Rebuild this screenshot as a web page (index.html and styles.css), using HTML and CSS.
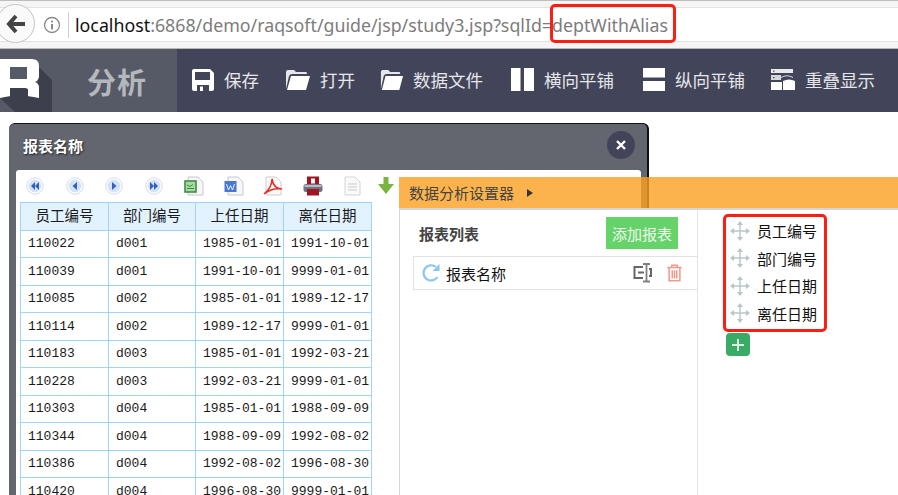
FILE: index.html
```html
<!DOCTYPE html>
<html>
<head>
    <meta charset="UTF-8">
    <title>数据分析设置器</title>
    <link rel="stylesheet" href="styles.css">
</head>
<body>

    <!-- Browser address bar -->
    <div class="browser-bar">
        <div class="back-btn">
            <svg width="20" height="20" viewBox="0 0 20 20"><path d="M10 2 L3 10 L10 18 M3.5 10 H19" fill="none" stroke="#444" stroke-width="4"/></svg>
        </div>
        <div class="address">
            <svg class="info" width="18" height="18" viewBox="0 0 18 18"><circle cx="9" cy="9" r="7.5" fill="none" stroke="#8a8a8a" stroke-width="1.3"/><rect x="8.2" y="8" width="1.7" height="5.5" fill="#777"/><rect x="8.2" y="4.6" width="1.7" height="1.8" fill="#777"/></svg>
            <span class="url"><span class="host">localhost</span>:6868/demo/raqsoft/guide/jsp/study3.jsp?sqlId=deptWithAlias</span>
        </div>
    </div>
    <div class="mark mark-url"></div>

    <!-- App nav -->
    <div class="nav">
        <div class="brand">
            <svg class="logo" width="56" height="63" viewBox="0 0 56 63">
                <path d="M0 49 L15 63 H52 V31 L38 17 V48 H28 V39 H10 V48 H0 Z" fill="#3d404c"/>
                <path d="M0 10 H32 Q39 10 39 17 V27 Q39 31 35 33 Q39 35 39 38 V49 L28 47 V41 Q28 39 25 39 H10 V47 L0 49 Z M10 18 V30 H27 V18 Z" fill="#fff" fill-rule="evenodd"/>
            </svg>
            <span class="brand-name">分析</span>
        </div>
        <div class="nav-items">
            <div class="nav-item">
                <svg width="22" height="22" viewBox="0 0 22 22"><path d="M2 0 H18 L22 4 V20 Q22 22 20 22 H2 Q0 22 0 20 V2 Q0 0 2 0 Z M3 3 V11 H18 V3 Z M5 16 V22 H17 V16 Z" fill="#fff" fill-rule="evenodd"/><rect x="8" y="17.5" width="3" height="4.5" fill="#fff"/></svg>
                <span>保存</span>
            </div>
            <div class="nav-item">
                <svg width="25" height="22" viewBox="0 0 25 22"><path d="M1 20 V3 Q1 1 3 1 H9 L11 3 H21 Q22 3 22 5 H7 Q5 5 4 7 Z" fill="#e6e7ea"/><path d="M6 7 H25 L21 21 H2 Z" fill="#fff"/></svg>
                <span>打开</span>
            </div>
            <div class="nav-item tight">
                <svg width="23" height="22" viewBox="0 0 25 22" preserveAspectRatio="none"><path d="M1 20 V3 Q1 1 3 1 H9 L11 3 H21 Q22 3 22 5 H7 Q5 5 4 7 Z" fill="#e6e7ea"/><path d="M6 7 H25 L21 21 H2 Z" fill="#fff"/></svg>
                <span>数据文件</span>
            </div>
            <div class="nav-item tiled">
                <svg width="23" height="23" viewBox="0 0 23 23"><rect x="0" y="0" width="9.5" height="23" fill="#fff"/><rect x="13" y="0" width="10" height="23" fill="#fff"/></svg>
                <span>横向平铺</span>
            </div>
            <div class="nav-item tiled-wide">
                <svg width="22" height="23" viewBox="0 0 23 23" preserveAspectRatio="none"><rect x="0" y="0" width="23" height="9.5" fill="#fff"/><rect x="0" y="13" width="23" height="10" fill="#fff"/></svg>
                <span>纵向平铺</span>
            </div>
            <div class="nav-item">
                <svg width="24" height="21" viewBox="0 0 24 21"><rect x="0" y="0" width="22" height="4" fill="#e8e9ec"/><rect x="2" y="1.5" width="1.5" height="1.2" fill="#555"/><rect x="0" y="6" width="10" height="5" fill="#d5d6db"/><rect x="2" y="8" width="1.5" height="1.2" fill="#555"/><path d="M10 8.5 Q16 5 22 8.5" fill="none" stroke="#d5d6db"/><rect x="0" y="13" width="11" height="8" fill="#fff"/><path d="M12 21 V12 Q18 9 24 12 V21 Z" fill="#fff"/></svg>
                <span>重叠显示</span>
            </div>
        </div>
    </div>

    <!-- Report window -->
    <div class="window">
        <div class="window-head">
            <span class="window-title">报表名称</span>
            <div class="close-btn">
                <svg width="10" height="10" viewBox="0 0 10 10"><path d="M1 1 L9 9 M9 1 L1 9" stroke="#fff" stroke-width="2.4"/></svg>
            </div>
        </div>
        <div class="window-body">
            <div class="toolbar">
                <svg class="pager" width="18" height="18" viewBox="0 0 18 18"><circle cx="9" cy="9" r="8.2" fill="#fff" stroke="#d3dbe8"/><circle cx="9" cy="9" r="6.4" fill="#d5e2f7"/><path d="M9 5 V13 L5 9 Z M13 5 V13 L9 9 Z" fill="#2f63bd"/></svg>
                <svg class="pager" width="18" height="18" viewBox="0 0 18 18"><circle cx="9" cy="9" r="8.2" fill="#fff" stroke="#d3dbe8"/><circle cx="9" cy="9" r="6.4" fill="#d5e2f7"/><path d="M11 5 V13 L6.5 9 Z" fill="#2f63bd"/></svg>
                <svg class="pager" width="18" height="18" viewBox="0 0 18 18"><circle cx="9" cy="9" r="8.2" fill="#fff" stroke="#d3dbe8"/><circle cx="9" cy="9" r="6.4" fill="#d5e2f7"/><path d="M7 5 V13 L11.5 9 Z" fill="#2f63bd"/></svg>
                <svg class="pager" width="18" height="18" viewBox="0 0 18 18"><circle cx="9" cy="9" r="8.2" fill="#fff" stroke="#d3dbe8"/><circle cx="9" cy="9" r="6.4" fill="#d5e2f7"/><path d="M5 5 V13 L9 9 Z M9 5 V13 L13 9 Z" fill="#2f63bd"/></svg>
                <svg class="doc" width="20" height="20" viewBox="0 0 20 20"><path d="M4 1 H14 L19 6 V19 H4 Z" fill="#f7f7f7" stroke="#c8c8d0"/><rect x="1" y="5" width="11" height="11" fill="#a9d8a8" stroke="#3c8f42" stroke-width="1.6"/><path d="M3 9 L6 10.5 L9 8.5 M3 12.5 H10" stroke="#3c8f42" fill="none"/></svg>
                <svg class="doc" width="20" height="20" viewBox="0 0 20 20"><path d="M4 1 H14 L19 6 V19 H4 Z" fill="#f7f7f7" stroke="#c4c8d8"/><rect x="0.5" y="5" width="12" height="11" fill="#4a78d0"/><path d="M2.5 8 L4.5 14 L6.5 9.5 L8.5 14 L10.5 8" fill="none" stroke="#e3ecfb"/></svg>
                <svg class="doc" width="20" height="20" viewBox="0 0 20 20"><path d="M3 1 H13 L18 6 V19 H3 Z" fill="#fafafa" stroke="#d0ccd0"/><path d="M1 18 C6 14 9 8 9 3 C10 9 13 13 19 13 C13 12 6 14 1 18 Z" fill="none" stroke="#e0342a" stroke-width="1.6"/></svg>
                <svg class="doc" width="20" height="20" viewBox="0 0 20 20"><rect x="4" y="0.5" width="12" height="9" fill="#a11420"/><rect x="0.5" y="8" width="19" height="8" rx="2.5" fill="#6c7280"/><rect x="1.5" y="9" width="17" height="2" fill="#b6bac2"/><rect x="4" y="13" width="12" height="6.5" fill="#a11420"/><rect x="8" y="2.5" width="4" height="5" fill="#fff"/></svg>
                <svg class="doc" width="20" height="20" viewBox="0 0 20 20"><path d="M3 1 H13 L18 6 V19 H3 Z" fill="#fafafa" stroke="#d4d4d4"/><path d="M6 8 H15 M6 11 H15 M6 14 H15" stroke="#c8c8c8"/></svg>
                <svg class="arrow" width="16" height="17" viewBox="0 0 16 17"><path d="M5.5 0 H10.5 V7 H16 L8 17 L0 7 H5.5 Z" fill="#7ab540"/></svg>
            </div>
            <table class="report">
                <tr><th>员工编号</th><th>部门编号</th><th>上任日期</th><th>离任日期</th></tr>
                <tr><td>110022</td><td>d001</td><td>1985-01-01</td><td>1991-10-01</td></tr>
                <tr><td>110039</td><td>d001</td><td>1991-10-01</td><td>9999-01-01</td></tr>
                <tr><td>110085</td><td>d002</td><td>1985-01-01</td><td>1989-12-17</td></tr>
                <tr><td>110114</td><td>d002</td><td>1989-12-17</td><td>9999-01-01</td></tr>
                <tr><td>110183</td><td>d003</td><td>1985-01-01</td><td>1992-03-21</td></tr>
                <tr><td>110228</td><td>d003</td><td>1992-03-21</td><td>9999-01-01</td></tr>
                <tr><td>110303</td><td>d004</td><td>1985-01-01</td><td>1988-09-09</td></tr>
                <tr><td>110344</td><td>d004</td><td>1988-09-09</td><td>1992-08-02</td></tr>
                <tr><td>110386</td><td>d004</td><td>1992-08-02</td><td>1996-08-30</td></tr>
                <tr><td>110420</td><td>d004</td><td>1996-08-30</td><td>9999-01-01</td></tr>
            </table>
        </div>
    </div>

    <!-- Settings panel lying over the window -->
    <div class="panel">
        <div class="panel-head">
            <span>数据分析设置器</span>
            <i class="caret"></i>
        </div>
        <div class="panel-main">
            <div class="report-list">
                <div class="list-head">
                    <span class="list-title">报表列表</span>
                    <button class="add-btn">添加报表</button>
                </div>
                <div class="list-row">
                    <svg width="20" height="20" viewBox="0 0 20 20"><path d="M16.5 14 A7.6 7.6 0 1 1 15 4" fill="none" stroke="#8cc6ec" stroke-width="2.2"/><path d="M18.5 1 V8 H11.5 Z" fill="#8cc6ec"/></svg>
                    <span class="row-name">报表名称</span>
                    <svg class="rename" width="19" height="20" viewBox="0 0 19 20"><path d="M10 4 H1.5 V15 H10 M16 6 H18 V13 H16 M5 9.5 H11" fill="none" stroke="#666" stroke-width="2"/><path d="M10 1 H17 M10 18.5 H17 M13.5 1 V18.5" fill="none" stroke="#808080" stroke-width="1.8"/></svg>
                    <svg class="trash" width="17" height="18" viewBox="0 0 18 20"><path d="M1 4 H17 M6 4 V1.5 H12 V4 M3 4 V18.5 H15 V4 M6.5 7 V16 M9 7 V16 M11.5 7 V16" fill="none" stroke="#f2998c" stroke-width="1.7"/></svg>
                </div>
            </div>
            <div class="fields">
                <div class="field"><svg class="move" width="20" height="20"><use href="#move"/></svg><span>员工编号</span></div>
                <div class="field"><svg class="move" width="20" height="20"><use href="#move"/></svg><span>部门编号</span></div>
                <div class="field"><svg class="move" width="20" height="20"><use href="#move"/></svg><span>上任日期</span></div>
                <div class="field"><svg class="move" width="20" height="20"><use href="#move"/></svg><span>离任日期</span></div>
                <div class="add-field">
                    <svg width="12" height="12" viewBox="0 0 12 12"><path d="M6 0 V12 M0 6 H12" stroke="#d9f0e0" stroke-width="2"/></svg>
                </div>
            </div>
        </div>
    </div>
    <div class="mark mark-fields"></div>

    <svg class="defs" width="0" height="0">
        <symbol id="move" viewBox="0 0 20 20">
            <path d="M10 2 V18 M2 10 H18" stroke="#b9c6c6" stroke-width="1.4"/>
            <path d="M10 0 L13 4 H7 Z M10 20 L13 16 H7 Z M0 10 L4 7 V13 Z M20 10 L16 7 V13 Z" fill="#b9c6c6"/>
        </symbol>
    </svg>

</body>
</html>
```

FILE: styles.css
```css
/* General Styling */
html, body {
    height: 495px;
    overflow: hidden;
}

body {
    position: relative;
    margin: 0;
    background: #fff;
    font-family: "Noto Sans CJK SC", "Noto Sans", sans-serif;
    color: #222;
}

/* Browser bar */
.browser-bar {
    box-sizing: border-box;
    height: 49px;
    padding-top: 6px;
    background: #f5f5f5;
    border-top: 1px solid #bdbdbd;
    border-bottom: 1px solid #b8b8b8;
    position: relative;
}

.back-btn {
    box-sizing: border-box;
    position: absolute;
    left: -4px;
    top: 3px;
    width: 39px;
    height: 39px;
    padding-left: 1px;
    border: 1px solid #c4c4c4;
    border-radius: 50%;
    background: #fafafa;
    display: flex;
    align-items: center;
    justify-content: center;
    z-index: 1;
}

.address {
    box-sizing: border-box;
    height: 35px;
    padding-left: 43px;
    background: #fff;
    border-top: 1px solid #e2e2e2;
    border-bottom: 1px solid #e2e2e2;
    display: flex;
    align-items: center;
}

.info {
    margin-right: 7px;
}

.url {
    padding-left: 6px;
    border-left: 1px solid #cfcfcf;
    font-family: "Noto Sans", sans-serif;
    font-size: 17.8px;
    line-height: 26px;
    color: #7c7c7c;
    white-space: nowrap;
}

.host {
    color: #111;
}

/* Red annotation boxes */
.mark {
    box-sizing: border-box;
    position: absolute;
    border: 3px solid #fb1f12;
    border-radius: 5px;
    z-index: 5;
}

.mark-url {
    left: 550px;
    top: 4px;
    width: 126px;
    height: 39px;
}

.mark-fields {
    left: 723px;
    top: 214px;
    width: 104px;
    height: 118px;
}

/* Nav */
.nav {
    height: 63px;
    display: flex;
    background: #424559;
}

.brand {
    width: 177px;
    background: #555a66;
    display: flex;
    align-items: center;
}

.logo {
    flex: none;
}

.brand-name {
    margin-left: 31px;
    font-size: 29px;
    font-weight: 700;
    letter-spacing: 1px;
    color: #b4b7bc;
}

.nav-items {
    display: flex;
    align-items: center;
    gap: 26px;
    padding-left: 15px;
}

.nav-item {
    display: flex;
    align-items: center;
    gap: 10px;
    padding-bottom: 2px;
    color: #e6e7ea;
    font-size: 17.5px;
    white-space: nowrap;
}

.tight {
    margin-left: -1px;
}

.tiled {
    margin-left: 2px;
}

.tiled-wide {
    margin-left: 3px;
}

/* Report window */
.window {
    box-sizing: border-box;
    width: 640px;
    height: 372px;
    margin: 11px 0 0 9px;
    padding: 0 6px 0 7px;
    background: #63666f;
    border-top: 1px solid #111;
    border-right: 2px solid #111;
    border-radius: 6px 6px 0 0;
    overflow: hidden;
}

.window-head {
    height: 46px;
    padding-bottom: 4px;
    box-sizing: border-box;
    display: flex;
    align-items: center;
    justify-content: space-between;
}

.window-title {
    margin-left: 7px;
    font-size: 15px;
    font-weight: 700;
    color: #fff;
    text-shadow: 1px 1px 2px #222;
}

.close-btn {
    width: 28px;
    height: 28px;
    margin-right: 6px;
    border-radius: 50%;
    background: #424559;
    display: flex;
    align-items: center;
    justify-content: center;
}

.window-body {
    height: 330px;
    padding: 0 4px;
    background: #fff;
    border-radius: 3px 3px 0 0;
    overflow: hidden;
}

.toolbar {
    height: 32px;
    display: flex;
    align-items: center;
    padding-left: 6px;
}

.pager {
    flex: none;
    margin-right: 21.5px;
}

.doc {
    flex: none;
    margin-right: 19.5px;
}

.arrow {
    flex: none;
    margin-left: -3.5px;
    margin-bottom: 2px;
}

.report {
    width: 351px;
    table-layout: fixed;
    border-collapse: collapse;
    font-family: "Liberation Mono", monospace;
    font-size: 13px;
    color: #1a1a1a;
}

.report th,
.report td {
    box-sizing: border-box;
    height: 27.5px;
    padding: 0 0 0 7px;
    border: 1px solid #9fd3fd;
    white-space: nowrap;
    overflow: hidden;
}

.report th {
    width: 88px;
    padding: 0 0 3px;
    font-family: "Noto Sans CJK SC", sans-serif;
    font-size: 14.5px;
    font-weight: 400;
    background: #e3f2ff;
}

.report th:nth-child(2) {
    width: 87px;
}

/* Settings panel */
.panel {
    position: absolute;
    left: 399px;
    top: 177px;
    width: 499px;
    height: 318px;
    z-index: 2;
}

.panel-head {
    box-sizing: border-box;
    height: 33px;
    padding-left: 10px;
    background: rgba(252, 160, 32, 0.8);
    border-bottom: 2px solid #d6d6d6;
    display: flex;
    align-items: center;
    gap: 13px;
    font-size: 15px;
    color: #444;
}

.caret {
    width: 0;
    height: 0;
    border-left: 6px solid #333;
    border-top: 4px solid transparent;
    border-bottom: 4px solid transparent;
}

.panel-main {
    height: 285px;
    background: #fff;
    display: flex;
}

.report-list {
    box-sizing: border-box;
    width: 299px;
    border-left: 1px solid #d8d8d8;
    border-right: 1px solid #e4e4e4;
}

.list-head {
    height: 46px;
    padding: 0 19px;
    display: flex;
    align-items: center;
    justify-content: space-between;
}

.list-title {
    font-size: 15px;
    font-weight: 700;
    color: #444;
}

.add-btn {
    width: 72px;
    height: 32px;
    padding: 0;
    border: none;
    background: #66d26a;
    color: #eefbee;
    font-family: inherit;
    font-size: 15px;
}

.list-row {
    box-sizing: border-box;
    height: 34px;
    margin-left: 13px;
    margin-right: -1px;
    padding-left: 7px;
    border: 1px solid #e2e2e2;
    border-right: none;
    display: flex;
    align-items: center;
    font-size: 15px;
    color: #111;
}

.row-name {
    margin-left: 5px;
}

.rename {
    margin-left: auto;
}

.trash {
    margin: 0 15px 0 14px;
}

.fields {
    padding: 7px 0 0 28px;
}

.field {
    height: 27.5px;
    display: flex;
    align-items: center;
    gap: 7px;
    padding-left: 4px;
    font-size: 15px;
    color: #111;
}

.add-field {
    width: 24px;
    height: 23px;
    margin-top: 6px;
    border-radius: 4px;
    background: #39ab66;
    display: flex;
    align-items: center;
    justify-content: center;
}

.defs {
    position: absolute;
}
```
